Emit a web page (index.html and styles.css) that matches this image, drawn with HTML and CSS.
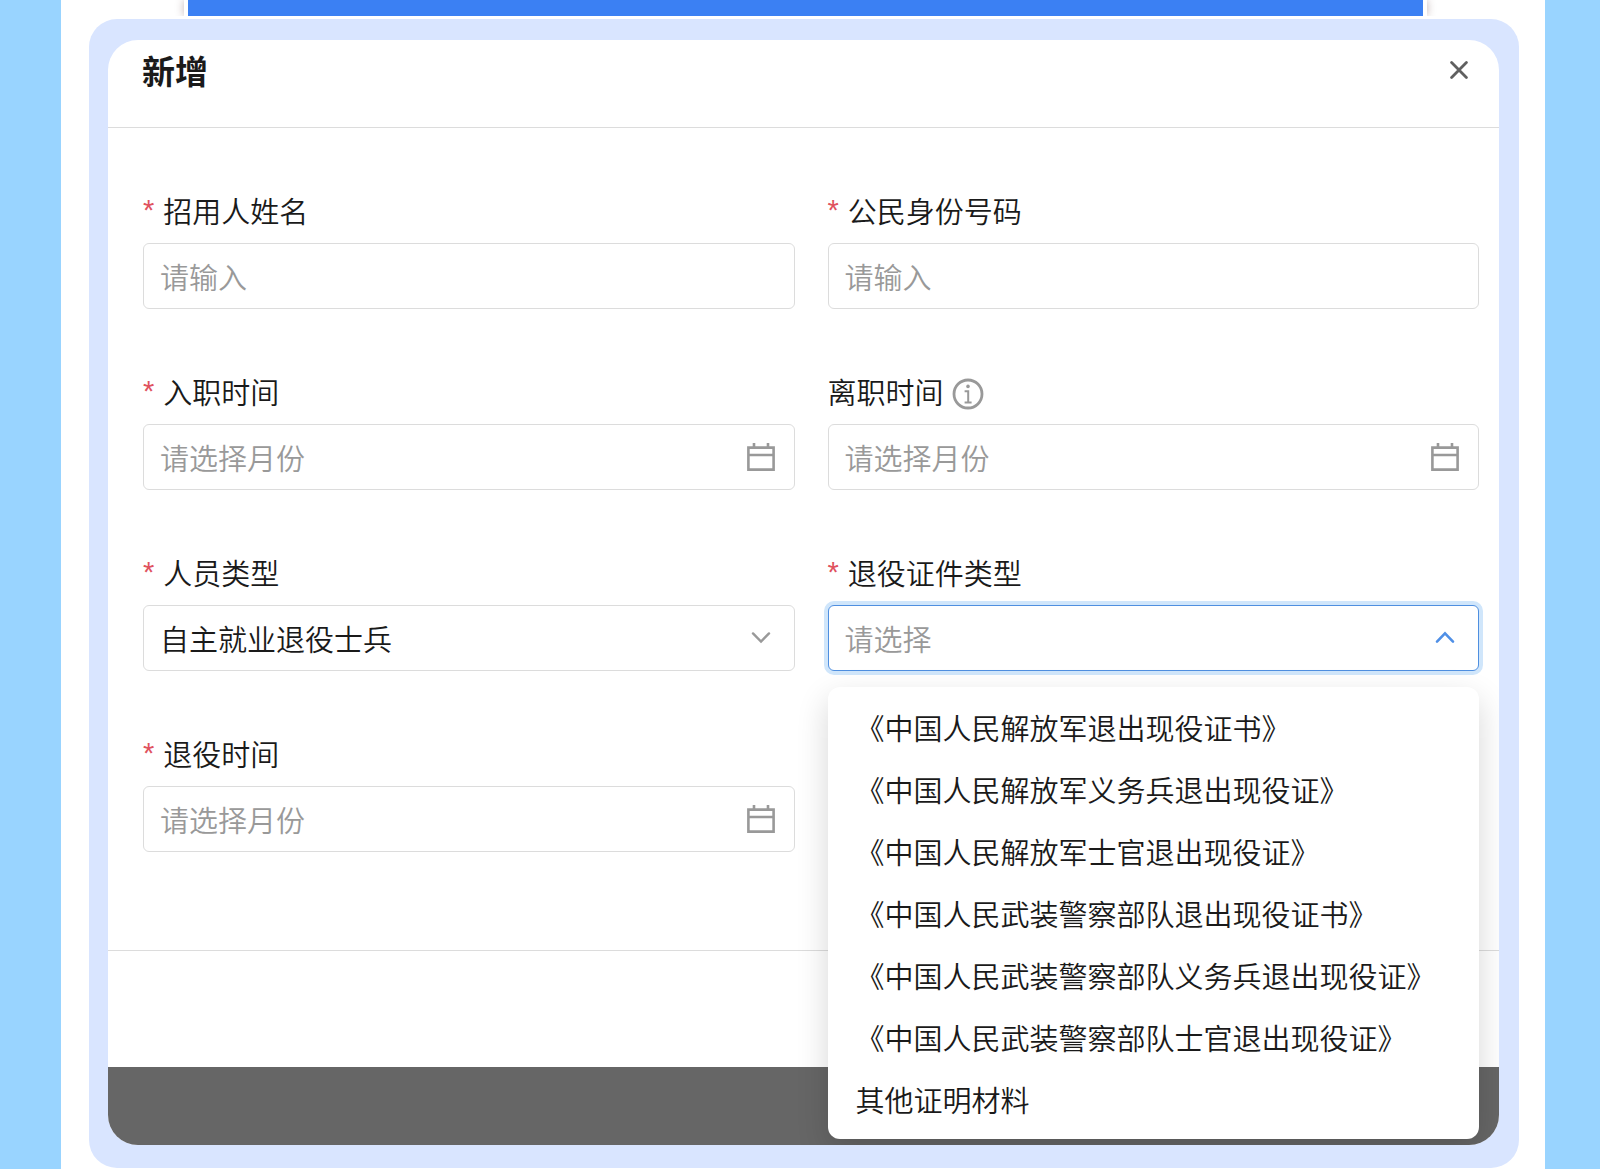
FILE: index.html
```
<!DOCTYPE html>
<html lang="zh-CN">
<head>
    <meta charset="UTF-8">
    <meta name="viewport" content="width=device-width, initial-scale=1.0">
    <title>新增</title>
    <link rel="stylesheet" href="styles.css">
</head>
<body>
    <main class="page">
        <div class="banner-wrap">
            <div class="banner"></div>
        </div>

        <div class="panel">
            <section class="dialog" role="dialog" aria-labelledby="dialog-title">
                <header class="dialog-header">
                    <h1 class="dialog-title" id="dialog-title">新增</h1>
                    <button class="close-button" type="button" aria-label="关闭">
                        <svg width="18" height="18" viewBox="0 0 18 18" fill="none" stroke="#606060" stroke-width="2.8" stroke-linecap="round">
                            <path d="M1.6 1.6 16.4 16.4M16.4 1.6 1.6 16.4"/>
                        </svg>
                    </button>
                </header>

                <form class="form">
                    <div class="field">
                        <label class="label required" for="name">招用人姓名</label>
                        <div class="control">
                            <input class="input" id="name" type="text" placeholder="请输入">
                        </div>
                    </div>

                    <div class="field">
                        <label class="label required" for="id-number">公民身份号码</label>
                        <div class="control">
                            <input class="input" id="id-number" type="text" placeholder="请输入">
                        </div>
                    </div>

                    <div class="field">
                        <label class="label required" for="entry-date">入职时间</label>
                        <div class="control">
                            <input class="input" id="entry-date" type="text" placeholder="请选择月份">
                            <svg class="icon" viewBox="0 0 28 28" fill="none" stroke="#999" stroke-width="2.6">
                                <path d="M1.4 4.6H26.6V26.6H1.4ZM1.4 12H26.6M7 0V5M21 0V5"/>
                            </svg>
                        </div>
                    </div>

                    <div class="field">
                        <label class="label" for="leave-date">离职时间
                            <svg class="info" viewBox="0 0 32 32" fill="none" stroke="#999">
                                <circle cx="16" cy="16" r="14" stroke-width="2.8"/>
                                <path d="M12.6 13.2H16.2V24M12.6 24.4H19.6" stroke-width="2"/>
                                <circle cx="16" cy="8.4" r="1.8" fill="#999" stroke="none"/>
                            </svg>
                        </label>
                        <div class="control">
                            <input class="input" id="leave-date" type="text" placeholder="请选择月份">
                            <svg class="icon" viewBox="0 0 28 28" fill="none" stroke="#999" stroke-width="2.6">
                                <path d="M1.4 4.6H26.6V26.6H1.4ZM1.4 12H26.6M7 0V5M21 0V5"/>
                            </svg>
                        </div>
                    </div>

                    <div class="field">
                        <label class="label required" for="person-type">人员类型</label>
                        <div class="control">
                            <select class="input" id="person-type">
                                <option>自主就业退役士兵</option>
                            </select>
                            <svg class="icon" viewBox="0 0 28 28" fill="none" stroke="#999" stroke-width="2.4" stroke-linecap="round">
                                <path d="M6 9.4 14 17.6 22 9.4"/>
                            </svg>
                        </div>
                    </div>

                    <div class="field">
                        <label class="label required" for="cert-type">退役证件类型</label>
                        <div class="control control-open">
                            <select class="input empty" id="cert-type">
                                <option>请选择</option>
                            </select>
                            <svg class="icon" viewBox="0 0 28 28" fill="none" stroke="#4f8fe6" stroke-width="2.6" stroke-linecap="round">
                                <path d="M6 17.6 14 9.4 22 17.6"/>
                            </svg>
                        </div>
                        <ul class="menu" role="listbox" aria-label="退役证件类型">
                            <li class="menu-item" role="option">《中国人民解放军退出现役证书》</li>
                            <li class="menu-item" role="option">《中国人民解放军义务兵退出现役证》</li>
                            <li class="menu-item" role="option">《中国人民解放军士官退出现役证》</li>
                            <li class="menu-item" role="option">《中国人民武装警察部队退出现役证书》</li>
                            <li class="menu-item" role="option">《中国人民武装警察部队义务兵退出现役证》</li>
                            <li class="menu-item" role="option">《中国人民武装警察部队士官退出现役证》</li>
                            <li class="menu-item" role="option">其他证明材料</li>
                        </ul>
                    </div>

                    <div class="field">
                        <label class="label required" for="retire-date">退役时间</label>
                        <div class="control">
                            <input class="input" id="retire-date" type="text" placeholder="请选择月份">
                            <svg class="icon" viewBox="0 0 28 28" fill="none" stroke="#999" stroke-width="2.6">
                                <path d="M1.4 4.6H26.6V26.6H1.4ZM1.4 12H26.6M7 0V5M21 0V5"/>
                            </svg>
                        </div>
                    </div>
                </form>

                <footer class="dialog-footer"></footer>
                <div class="mask"></div>
            </section>
        </div>
    </main>
</body>
</html>
```
FILE: styles.css
```
* {
    box-sizing: border-box;
}

body {
    margin: 0;
    background: #99d4ff;
    color: #1a1a1a;
    font-family: "Noto Sans CJK SC", sans-serif;
    font-size: 29px;
    font-weight: 350;
}

.page {
    margin: 0 55px 0 61px;
    padding-bottom: 1px;
    background: #fff;
}

/* bottom edge of the page banner */
.banner-wrap {
    padding: 0 118px 0 123px;
    overflow: hidden;
}

.banner {
    height: 16px;
    border: solid #fff;
    border-width: 0 4px;
    background: #3b80f3;
    box-shadow: 0 0 8px rgba(80, 40, 40, 0.35);
}

.panel {
    margin: 3px 26px 0 28px;
    padding: 21px 20px 23px 19px;
    border-radius: 28px;
    background: #d9e5ff;
}

.dialog {
    overflow: hidden;
    border-radius: 30px;
    background: #fff;
}

.dialog-header {
    display: flex;
    justify-content: space-between;
    align-items: flex-start;
    padding: 8px 24px 35px 34px;
    border-bottom: 1px solid #dcdcdc;
}

.dialog-title {
    margin: 0;
    font-size: 33px;
    font-weight: 700;
    line-height: 44px;
}

.close-button {
    display: flex;
    align-items: center;
    justify-content: center;
    width: 32px;
    height: 44px;
    padding: 0;
    border: 0;
    background: none;
    cursor: pointer;
}

.form {
    display: grid;
    grid-template-columns: 1fr 1fr;
    gap: 62px 33px;
    padding: 62px 20px 98px 35px;
}

.field {
    position: relative;
    min-width: 0;
}

.label {
    display: flex;
    align-items: center;
    height: 40px;
    margin-bottom: 13px;
}

.required::before {
    content: "*";
    margin-right: 9px;
    color: #e0525e;
    font-family: "Liberation Sans", sans-serif;
    font-weight: 400;
}

.info {
    width: 32px;
    height: 32px;
    margin: 6px 0 0 8px;
}

.control {
    display: grid;
    align-items: center;
    height: 66px;
    border: 1px solid #dcdcdc;
    border-radius: 6px;
    background: #fff;
}

.control-open {
    border-color: #4f8fe0;
    box-shadow: 0 0 0 4px #d0e6fb;
}

.input {
    grid-area: 1 / 1;
    width: 100%;
    height: 64px;
    padding: 0 60px 0 16px;
    border: 0;
    outline: 0;
    background: none;
    color: inherit;
    font: inherit;
    appearance: none;
}

.input::placeholder,
.empty {
    color: #999;
    opacity: 1;
}

.icon {
    grid-area: 1 / 1;
    justify-self: end;
    width: 28px;
    height: 28px;
    margin-right: 19px;
    pointer-events: none;
}

.menu {
    position: absolute;
    top: 135px;
    left: 0;
    right: 0;
    z-index: 1;
    margin: 0;
    padding: 9px 0;
    border-radius: 12px;
    background: #fff;
    box-shadow: 0 12px 32px rgba(0, 0, 0, 0.16);
    list-style: none;
}

.menu-item {
    padding: 0 28px;
    line-height: 62px;
    white-space: nowrap;
    cursor: pointer;
}

.dialog-footer {
    height: 117px;
    border-top: 1px solid #dcdcdc;
}

.mask {
    height: 78px;
    background: #666;
}
```
